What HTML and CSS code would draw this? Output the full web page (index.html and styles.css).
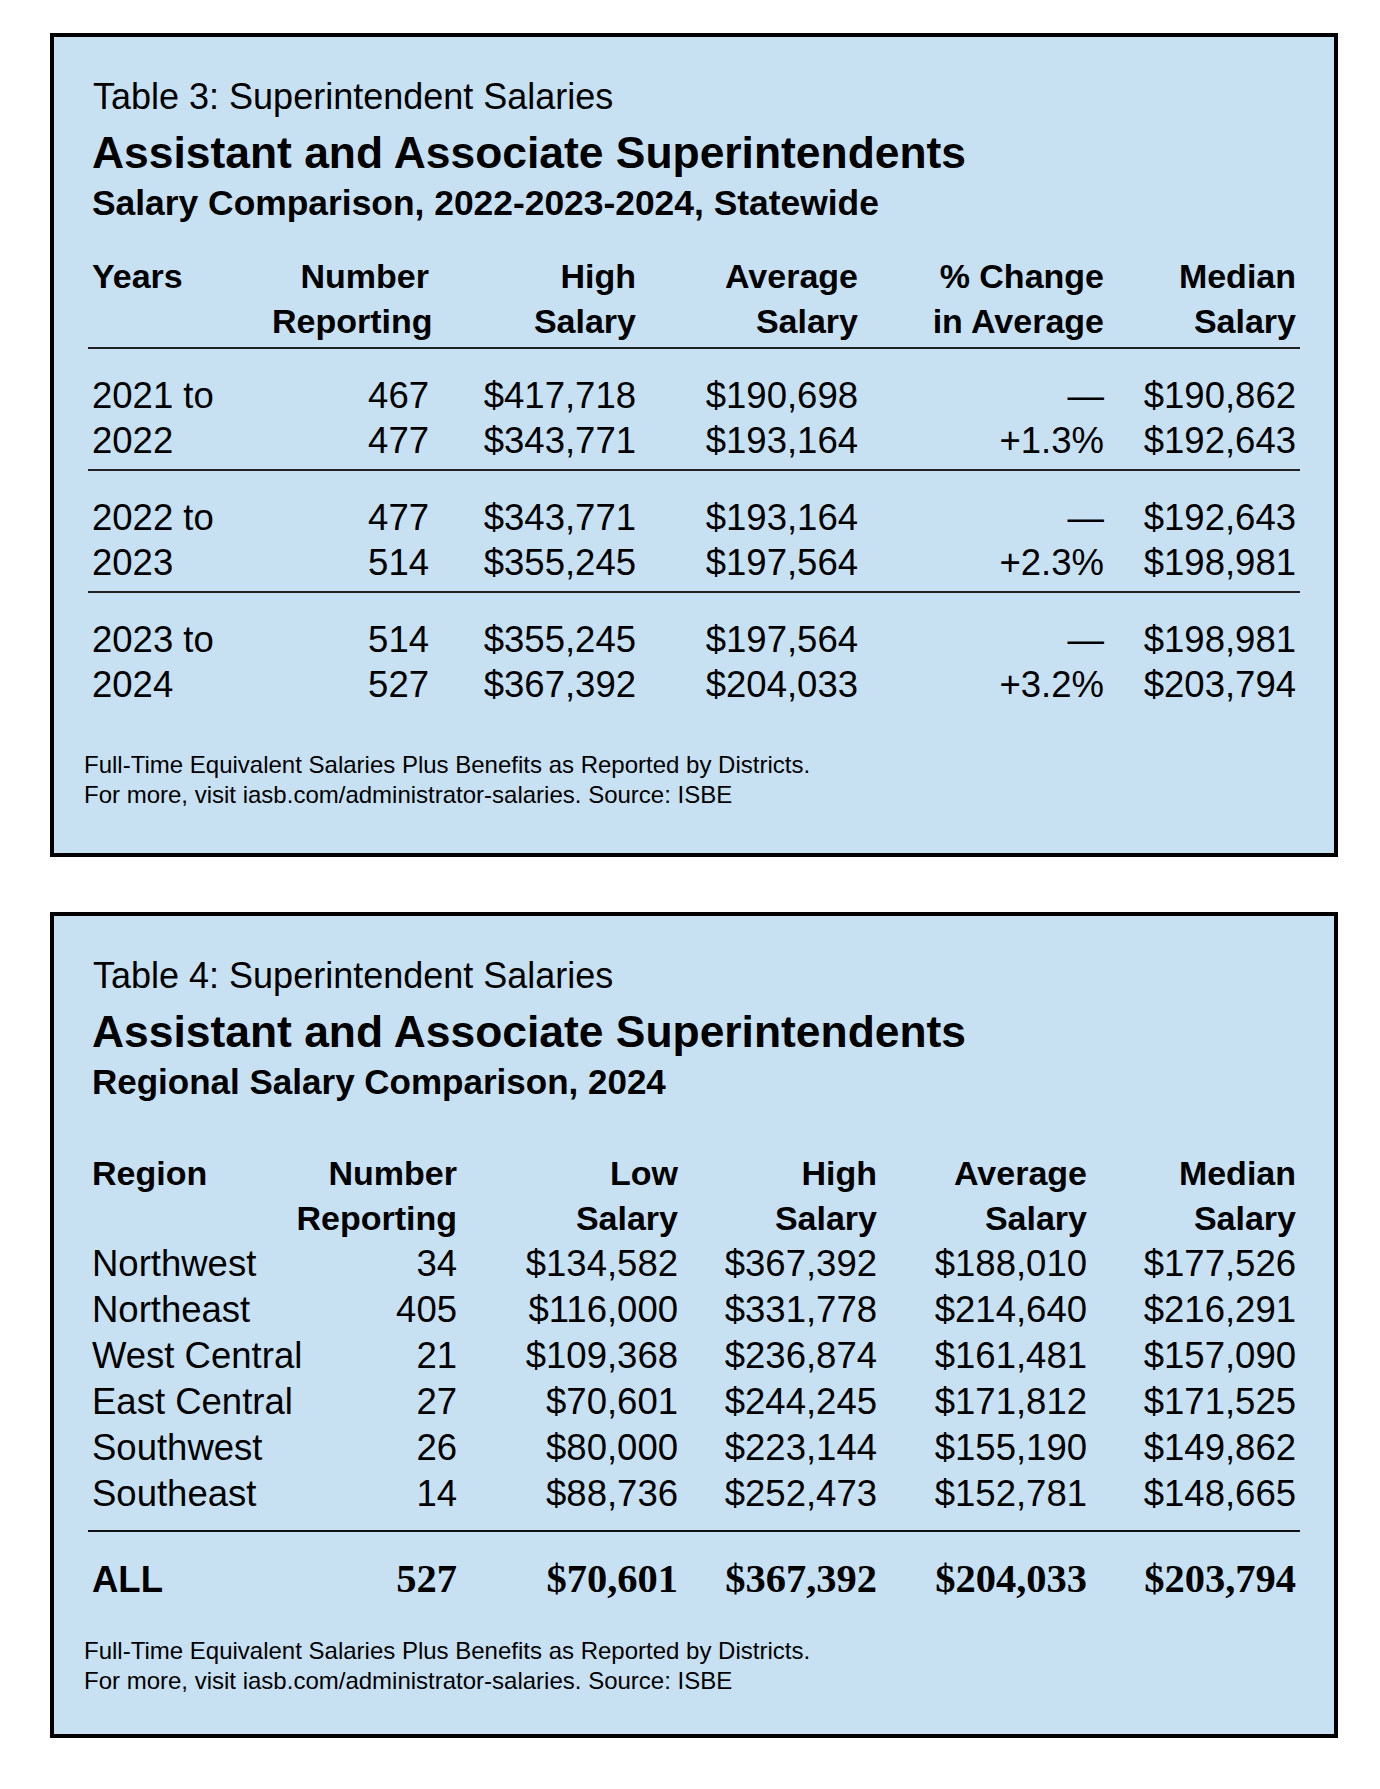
FILE: index.html
```html
<!DOCTYPE html>
<html lang="en">
<head>
<meta charset="utf-8">
<title>Superintendent Salaries</title>
<link rel="stylesheet" href="styles.css">
</head>
<body>
<main class="page">
  <section class="card card--statewide">
    <p class="kicker">Table 3: Superintendent Salaries</p>
    <h1 class="title">Assistant and Associate Superintendents</h1>
    <h2 class="subtitle">Salary Comparison, 2022-2023-2024, Statewide</h2>
    <div class="table table--statewide">
      <div class="row row--head">
        <div class="cell cell--label">Years</div>
        <div class="cell">Number<br>Reporting</div>
        <div class="cell">High<br>Salary</div>
        <div class="cell">Average<br>Salary</div>
        <div class="cell">% Change<br>in Average</div>
        <div class="cell">Median<br>Salary</div>
      </div>
      <div class="group">
        <div class="row">
          <div class="cell cell--label">2021 to</div>
          <div class="cell">467</div>
          <div class="cell">$417,718</div>
          <div class="cell">$190,698</div>
          <div class="cell">&mdash;</div>
          <div class="cell">$190,862</div>
        </div>
        <div class="row">
          <div class="cell cell--label">2022</div>
          <div class="cell">477</div>
          <div class="cell">$343,771</div>
          <div class="cell">$193,164</div>
          <div class="cell">+1.3%</div>
          <div class="cell">$192,643</div>
        </div>
      </div>
      <div class="group">
        <div class="row">
          <div class="cell cell--label">2022 to</div>
          <div class="cell">477</div>
          <div class="cell">$343,771</div>
          <div class="cell">$193,164</div>
          <div class="cell">&mdash;</div>
          <div class="cell">$192,643</div>
        </div>
        <div class="row">
          <div class="cell cell--label">2023</div>
          <div class="cell">514</div>
          <div class="cell">$355,245</div>
          <div class="cell">$197,564</div>
          <div class="cell">+2.3%</div>
          <div class="cell">$198,981</div>
        </div>
      </div>
      <div class="group">
        <div class="row">
          <div class="cell cell--label">2023 to</div>
          <div class="cell">514</div>
          <div class="cell">$355,245</div>
          <div class="cell">$197,564</div>
          <div class="cell">&mdash;</div>
          <div class="cell">$198,981</div>
        </div>
        <div class="row">
          <div class="cell cell--label">2024</div>
          <div class="cell">527</div>
          <div class="cell">$367,392</div>
          <div class="cell">$204,033</div>
          <div class="cell">+3.2%</div>
          <div class="cell">$203,794</div>
        </div>
      </div>
    </div>
    <p class="note">Full-Time Equivalent Salaries Plus Benefits as Reported by Districts.<br>For more, visit iasb.com/administrator-salaries. Source: ISBE</p>
  </section>

  <section class="card card--regional">
    <p class="kicker">Table 4: Superintendent Salaries</p>
    <h1 class="title">Assistant and Associate Superintendents</h1>
    <h2 class="subtitle">Regional Salary Comparison, 2024</h2>
    <div class="table table--regional">
      <div class="row row--head">
        <div class="cell cell--label">Region</div>
        <div class="cell">Number<br>Reporting</div>
        <div class="cell">Low<br>Salary</div>
        <div class="cell">High<br>Salary</div>
        <div class="cell">Average<br>Salary</div>
        <div class="cell">Median<br>Salary</div>
      </div>
      <div class="rows">
        <div class="row">
          <div class="cell cell--label">Northwest</div>
          <div class="cell">34</div>
          <div class="cell">$134,582</div>
          <div class="cell">$367,392</div>
          <div class="cell">$188,010</div>
          <div class="cell">$177,526</div>
        </div>
        <div class="row">
          <div class="cell cell--label">Northeast</div>
          <div class="cell">405</div>
          <div class="cell">$116,000</div>
          <div class="cell">$331,778</div>
          <div class="cell">$214,640</div>
          <div class="cell">$216,291</div>
        </div>
        <div class="row">
          <div class="cell cell--label">West Central</div>
          <div class="cell">21</div>
          <div class="cell">$109,368</div>
          <div class="cell">$236,874</div>
          <div class="cell">$161,481</div>
          <div class="cell">$157,090</div>
        </div>
        <div class="row">
          <div class="cell cell--label">East Central</div>
          <div class="cell">27</div>
          <div class="cell">$70,601</div>
          <div class="cell">$244,245</div>
          <div class="cell">$171,812</div>
          <div class="cell">$171,525</div>
        </div>
        <div class="row">
          <div class="cell cell--label">Southwest</div>
          <div class="cell">26</div>
          <div class="cell">$80,000</div>
          <div class="cell">$223,144</div>
          <div class="cell">$155,190</div>
          <div class="cell">$149,862</div>
        </div>
        <div class="row">
          <div class="cell cell--label">Southeast</div>
          <div class="cell">14</div>
          <div class="cell">$88,736</div>
          <div class="cell">$252,473</div>
          <div class="cell">$152,781</div>
          <div class="cell">$148,665</div>
        </div>
      </div>
      <div class="row row--total">
        <div class="cell cell--label">ALL</div>
        <div class="cell cell--num">527</div>
        <div class="cell cell--num">$70,601</div>
        <div class="cell cell--num">$367,392</div>
        <div class="cell cell--num">$204,033</div>
        <div class="cell cell--num">$203,794</div>
      </div>
    </div>
    <p class="note">Full-Time Equivalent Salaries Plus Benefits as Reported by Districts.<br>For more, visit iasb.com/administrator-salaries. Source: ISBE</p>
  </section>
</main>
</body>
</html>
```

FILE: styles.css
```css
* {
  box-sizing: border-box;
  margin: 0;
  padding: 0;
}

body {
  margin: 0;
  background: #ffffff;
  color: #000000;
  font-family: "Liberation Sans", Arial, sans-serif;
}

.page {
  width: 1380px;
  padding: 33px 42px 40px 50px;
  display: flex;
  flex-direction: column;
  gap: 55px;
}

.card {
  width: 1288px;
  border: 4px solid #000000;
  background: #c7e1f3;
  padding: 40px 34px 43px;
}

.card--regional {
  padding-bottom: 38px;
}

.kicker {
  font-size: 36px;
  line-height: 40px;
  font-weight: 400;
  padding-left: 5px;
}

.title {
  font-size: 44.4px;
  line-height: 52px;
  font-weight: 700;
  margin-top: 10px;
  padding-left: 4px;
}

.subtitle {
  font-size: 35.4px;
  line-height: 40px;
  font-weight: 700;
  margin-top: 4px;
  padding-left: 4px;
}

.card--regional .subtitle {
  font-size: 35px;
}

.table {
  margin-top: 31px;
}

.table--regional {
  margin-top: 49px;
}

.row {
  display: grid;
  align-items: baseline;
  padding: 0 4px;
}

.table--statewide .row {
  grid-template-columns: 180px 157px 207px 222px 246px 192px;
}

.table--regional .row {
  grid-template-columns: 200px 165px 221px 199px 210px 209px;
}

.cell {
  font-size: 36.5px;
  line-height: 45px;
  text-align: right;
  white-space: nowrap;
}

.cell--label {
  text-align: left;
}

.row--head .cell {
  font-size: 34px;
  line-height: 45px;
  font-weight: 700;
}

.table--statewide .row--head {
  padding-bottom: 3px;
  border-bottom: 2px solid #222222;
}

.group {
  padding: 24px 0 6px;
  border-bottom: 2px solid #222222;
}

.group:last-child {
  border-bottom: none;
}

.rows {
  padding-bottom: 13px;
  border-bottom: 2px solid #111111;
}

.rows .cell {
  line-height: 46px;
}

.row--total {
  padding-top: 24px;
}

.row--total .cell {
  font-weight: 700;
  line-height: 46px;
}

.row--total .cell--num {
  font-family: "Liberation Serif", "Times New Roman", serif;
  font-size: 40.5px;
}

.note {
  font-size: 24px;
  line-height: 30px;
  margin-left: -4px;
  margin-top: 37px;
}

.card--regional .note {
  margin-top: 33px;
}
```
